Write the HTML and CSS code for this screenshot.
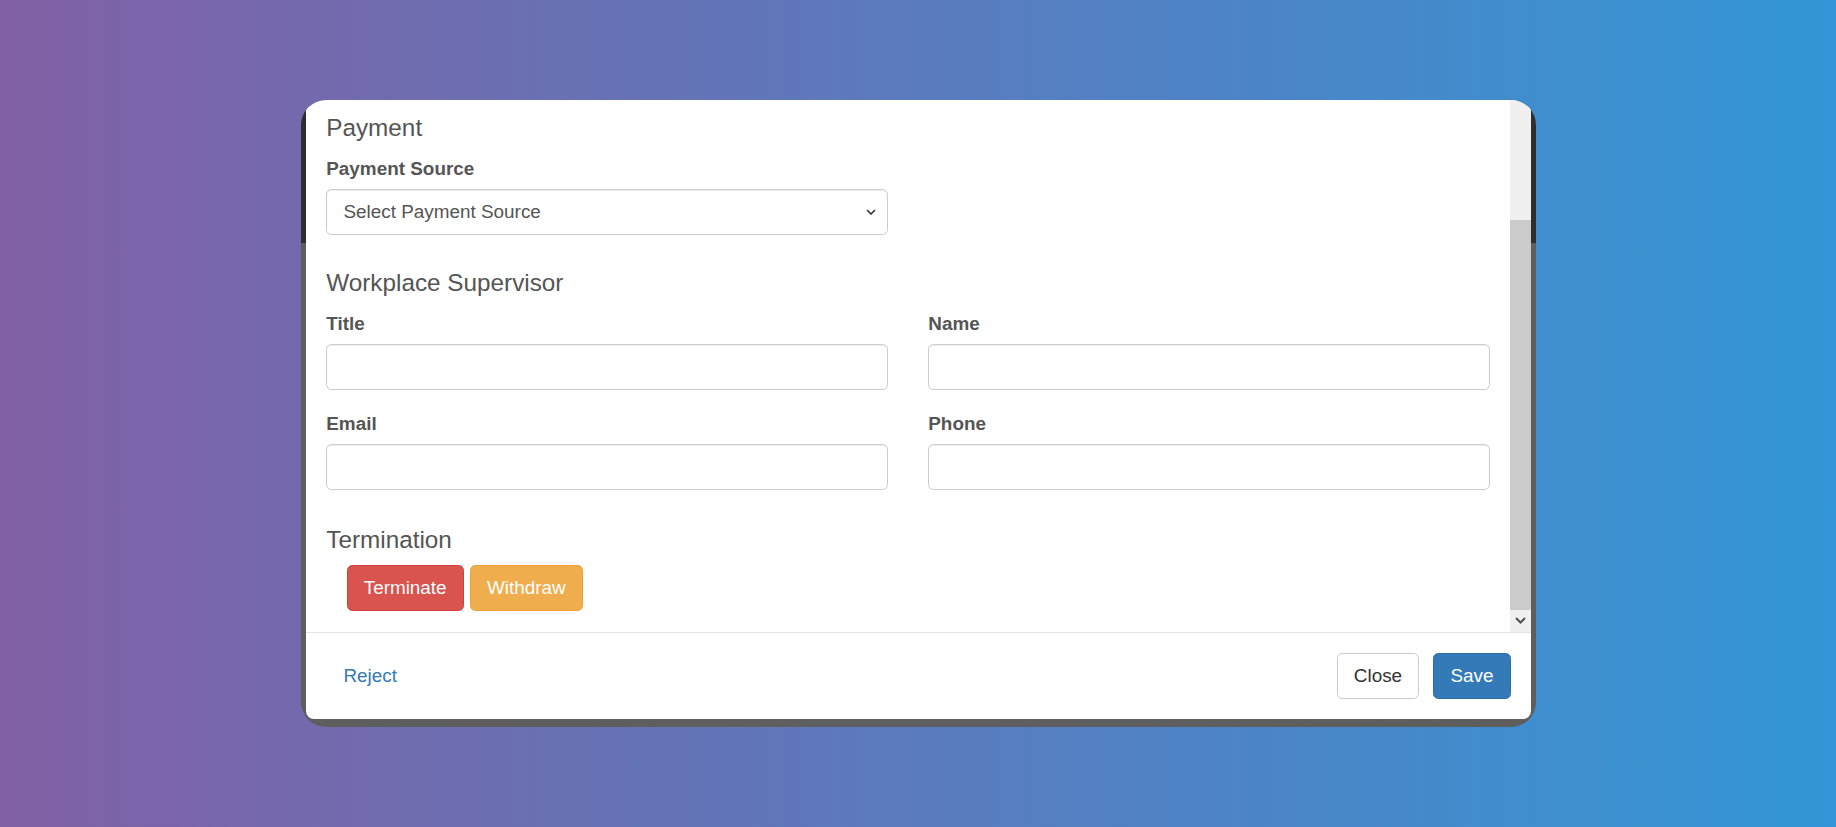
FILE: index.html
```html
<!DOCTYPE html>
<html lang="en">
<head>
<meta charset="utf-8">
<title>Placement details</title>
<link rel="stylesheet" href="styles.css">
</head>
<body>
  <div class="shot">
    <div class="modal">
      <div class="modal-main">
        <div class="modal-body">
          <h4>Payment</h4>
          <div class="grid">
            <div class="field">
              <label>Payment Source</label>
              <div class="control select">
                <span>Select Payment Source</span>
                <svg class="caret" width="10" height="6" viewBox="0 0 10 6"><path d="M1 1l4 4 4-4" fill="none" stroke="#333" stroke-width="1.6"/></svg>
              </div>
            </div>
          </div>

          <h4 class="section-supervisor">Workplace Supervisor</h4>
          <div class="grid">
            <div class="field">
              <label>Title</label>
              <div class="control"></div>
            </div>
            <div class="field">
              <label>Name</label>
              <div class="control"></div>
            </div>
            <div class="field">
              <label>Email</label>
              <div class="control"></div>
            </div>
            <div class="field">
              <label>Phone</label>
              <div class="control"></div>
            </div>
          </div>

          <h4 class="section-termination">Termination</h4>
          <div class="actions">
            <button class="btn btn-danger">Terminate</button>
            <button class="btn btn-warning">Withdraw</button>
          </div>
        </div>
        <div class="scrollbar">
          <div class="sb-top"></div>
          <div class="sb-thumb"></div>
          <div class="sb-arrow">
            <svg width="11" height="7" viewBox="0 0 11 7"><path d="M1 1l4.5 4.5L10 1" fill="none" stroke="#505050" stroke-width="2"/></svg>
          </div>
        </div>
      </div>
      <div class="modal-footer">
        <button class="btn btn-link">Reject</button>
        <div class="footer-right">
          <button class="btn btn-default">Close</button>
          <button class="btn btn-primary">Save</button>
        </div>
      </div>
    </div>
  </div>
</body>
</html>
```

FILE: styles.css
```css
* {
  box-sizing: border-box;
}

html,
body {
  margin: 0;
  height: 100%;
}

body {
  background: linear-gradient(90deg, #8160a5 0%, #3396d6 100%);
  font-family: "Liberation Sans", Arial, Helvetica, sans-serif;
  display: flex;
  justify-content: center;
  align-items: center;
}

/* captured browser window with the dimmed page behind the dialog */
.shot {
  width: 1235px;
  height: 627px;
  margin-left: 1px;
  border-radius: 25px;
  overflow: hidden;
  background: linear-gradient(#2e2e31 0 143px, #5e5e5e 143px);
  padding: 0 5px 8px;
  display: flex;
}

.modal {
  flex: 1;
  display: flex;
  flex-direction: column;
  background: #fff;
  border-radius: 0 0 8px 8px;
  overflow: hidden;
}

.modal-main {
  flex: 1;
  min-height: 0;
  display: flex;
}

/* body is scrolled to its end, so content sits at the bottom */
.modal-body {
  flex: 1;
  min-width: 0;
  overflow: hidden;
  display: flex;
  flex-direction: column;
  justify-content: flex-end;
  padding: 0 20.25px 20.25px;
  color: #555;
}

h4 {
  font-size: 24.3px;
  line-height: 26.7px;
  font-weight: 400;
  margin: 13.5px 0;
  color: #555;
}

.section-supervisor {
  margin-top: 14.5px;
}

.section-termination {
  margin: 16.5px 0 12px;
}

.grid {
  display: grid;
  grid-template-columns: 1fr 1fr;
  column-gap: 40.5px;
}

.field {
  margin-bottom: 20.25px;
}

label {
  display: block;
  font-size: 18.9px;
  font-weight: 700;
  line-height: 27px;
  margin-bottom: 7px;
  color: #555;
}

.control {
  height: 46px;
  border: 1px solid #ccc;
  border-radius: 5.4px;
  background: #fff;
  box-shadow: inset 0 1px 1px rgba(0, 0, 0, 0.075);
}

.select {
  display: flex;
  align-items: center;
  justify-content: space-between;
  padding: 0 11px 0 16.2px;
  font-size: 18.9px;
  color: #555;
}

.caret {
  display: block;
}

.actions {
  display: flex;
  gap: 6px;
  padding-left: 20.25px;
}

.btn {
  height: 45.9px;
  padding: 0 16.2px;
  font-family: inherit;
  font-size: 18.9px;
  border: 1px solid transparent;
  border-radius: 5.4px;
  background: none;
  cursor: pointer;
}

.btn-danger {
  background: #d9534f;
  border-color: #d43f3a;
  color: #fff;
}

.btn-warning {
  background: #f0ad4e;
  border-color: #eea236;
  color: #fff;
}

.btn-default {
  background: #fff;
  border-color: #ccc;
  color: #333;
}

.btn-primary {
  background: #337ab7;
  border-color: #2e6da4;
  color: #fff;
}

.btn-link {
  color: #337ab7;
}

.scrollbar {
  width: 21px;
  background: #f0f0f0;
  display: flex;
  flex-direction: column;
}

.sb-top {
  height: 120px;
}

.sb-thumb {
  flex: 1;
  background: #cbcbcb;
}

.sb-arrow {
  height: 22px;
  display: flex;
  align-items: center;
  justify-content: center;
}

.modal-footer {
  border-top: 1px solid #e5e5e5;
  padding: 20.25px;
  display: flex;
  justify-content: space-between;
  align-items: center;
}

.footer-right {
  display: flex;
  gap: 14px;
}
```
